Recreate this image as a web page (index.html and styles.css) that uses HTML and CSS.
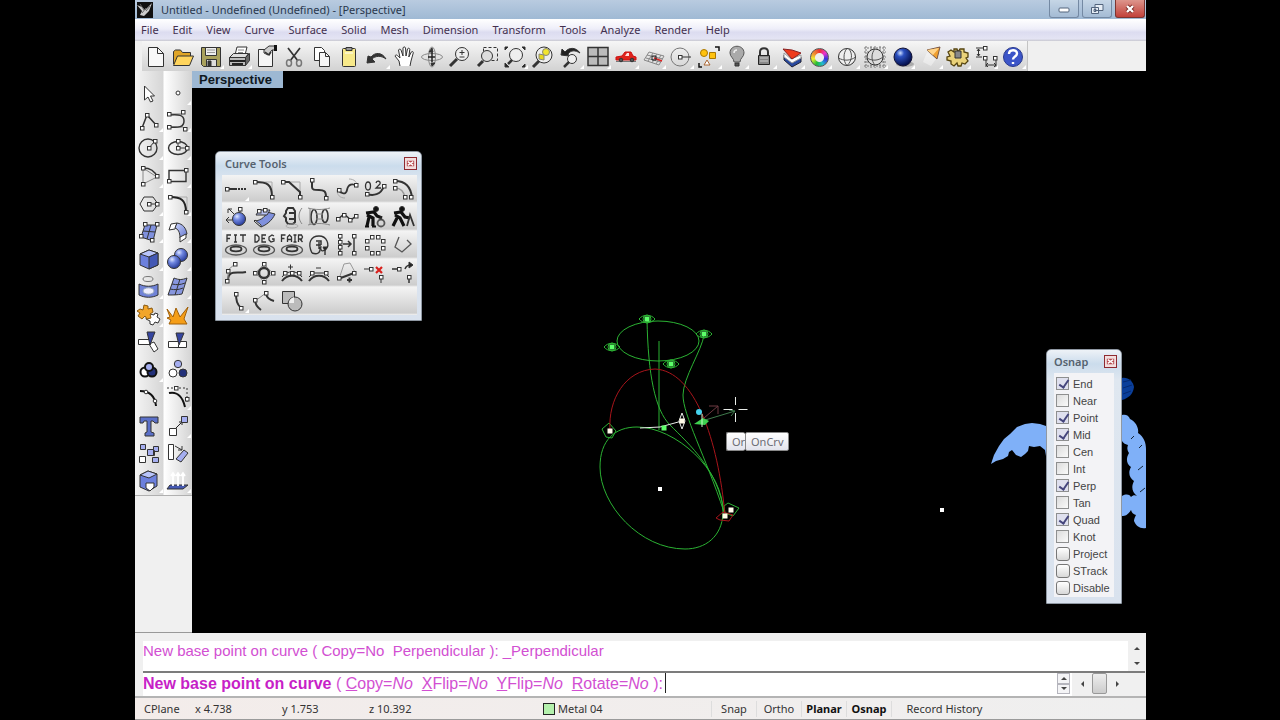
FILE: index.html
```html
<!DOCTYPE html>
<html lang="en">
<head>
  <meta charset="UTF-8">
  <meta name="viewport" content="width=device-width, initial-scale=1.0">
  <title>Untitled - Undefined (Undefined) - [Perspective]</title>
  <link rel="stylesheet" href="styles.css">
</head>
<body>
  <!-- shared icon parts -->
  <svg class="defs" aria-hidden="true">
    <defs>
      <rect id="h" x="-1.5" y="-1.5" width="3.5" height="3.5" fill="#fff" stroke="#333"/>
      <rect id="pt" x="-2.5" y="-2.5" width="5" height="5" stroke="none"/>
      <path id="eye" d="M-8 0c4-5 12-5 16 0-4 5-12 5-16 0zM-4 0a4 4 0 0 1 8 0 4 4 0 0 1-8 0z"/>
      <g id="rings"><ellipse cx="12" cy="17" rx="10.500" ry="5" stroke="#555" stroke-width="1.300"/><ellipse cx="12" cy="16" rx="5.500" ry="2.300" stroke-width="1.800"/></g>
      <radialGradient id="ball" cx="35%" cy="30%" r="70%"><stop offset="0" stop-color="#dde6ff"/><stop offset=".4" stop-color="#6f86e0"/><stop offset="1" stop-color="#2b3f9c"/></radialGradient>
      <radialGradient id="dark" cx="35%" cy="28%" r="70%"><stop offset="0" stop-color="#cfe0ff"/><stop offset=".3" stop-color="#2b50c0"/><stop offset="1" stop-color="#04104e"/></radialGradient>
      <linearGradient id="sheet" x2="1" y2="1"><stop offset="0" stop-color="#c9d3fb"/><stop offset="1" stop-color="#6577cf"/></linearGradient>
    </defs>
  </svg>

  <div class="app">
    <header class="titlebar">
      <svg class="app-icon" viewBox="0 0 16 16"><path d="M0 0h16v16H0z" fill="#111"/><path d="M0 3l5 2 3 3 7-7-3 8-5 5-4-1 2-4z" fill="#ccc"/><path d="M3 2l4 6M9 6l-4 5M9 9l4-5" stroke="#666"/></svg>
      <h1>Untitled - Undefined (Undefined) - [Perspective]</h1>
      <div class="window-btns">
        <button aria-label="Minimize"><svg viewBox="0 0 16 12"><rect x="3" y="5" width="10" height="4" rx="1" fill="#fff" stroke="#53647c"/></svg></button>
        <button aria-label="Restore"><svg viewBox="0 0 16 12"><path d="M6 1.500h8v6H6zM2.500 4.500h7v6h-7z" fill="#e6edf5" stroke="#53647c"/><path d="M5 6.500h2v2H5z" stroke="#53647c" fill="none"/></svg></button>
        <button class="close" aria-label="Close"><svg viewBox="0 0 16 12"><path d="M5 3l6 6M11 3l-6 6" stroke="#7a2a25" stroke-width="4"/><path d="M5 3l6 6M11 3l-6 6" stroke="#fff" stroke-width="2.400"/></svg></button>
      </div>
    </header>

    <nav class="menubar">
      <a href="#">File</a><a href="#">Edit</a><a href="#">View</a><a href="#">Curve</a><a href="#">Surface</a><a href="#">Solid</a><a href="#">Mesh</a><a href="#">Dimension</a><a href="#">Transform</a><a href="#">Tools</a><a href="#">Analyze</a><a href="#">Render</a><a href="#">Help</a>
    </nav>

    <div class="toolbar">
      <div class="tools">
        <button aria-label="New"><svg viewBox="0 0 24 24"><path d="M4.500 2.500h9l6 6v13h-15z" fill="#f8f8f8"/><path d="M13.500 2.500v6h6"/></svg></button>
        <button aria-label="Open"><svg viewBox="0 0 24 24"><path d="M2.500 19V6.500l2-1.500h5l2 2.500h8V11" fill="#e0a526"/><path d="M2.500 20.500L6.500 11h16l-4 9.500z" fill="#ffd45c"/></svg></button>
        <button class="fly" aria-label="Save"><svg viewBox="0 0 24 24"><path d="M2.500 2.500h19v19h-17l-2-2z" fill="#a9a15c"/><path d="M6.500 2.500h11v8h-11z" fill="#eee"/><path d="M8 5h8M8 7.500h8" stroke="#999"/><path d="M7.500 14.500h10v7h-10z" fill="#ddd"/><path d="M9 16h3v5H9z" fill="#333"/></svg></button>
        <button class="fly" aria-label="Print"><svg viewBox="0 0 24 24"><path d="M8 10l2-8h10l-2 8z" fill="#fff"/><path d="M2.500 12.500l4-4h15l-3 4z" fill="#ddd"/><path d="M2.500 12.500h16v8h-16z" fill="#bbb"/><path d="M18.500 12.500l4-4v7l-4 5z" fill="#666"/><path d="M3 16h15M5 19h11" stroke="#222" stroke-width="2"/><path d="M11 5h6M11 7.500h5" stroke="#888"/></svg></button>
        <button aria-label="Document properties"><svg viewBox="0 0 24 24"><path d="M4.500 4.500h14v17h-14z" fill="#f5f5f5"/><path d="M10 5l5-4h7v4h-4l-4 5-4-2z" fill="#ccc"/><path d="M21.500 0v6" stroke="#111" stroke-width="3"/><path d="M11 7l4 3 2-3" stroke-width="1.500"/></svg></button>
        <button aria-label="Cut"><svg viewBox="0 0 24 24"><path d="M6 3l10 13M18 3L8 16" stroke-width="1.700"/><ellipse cx="7" cy="18" rx="2.500" ry="3.200" stroke="#777" stroke-width="1.500"/><ellipse cx="17" cy="18" rx="2.500" ry="3.200" stroke="#777" stroke-width="1.500"/></svg></button>
        <button aria-label="Copy"><svg viewBox="0 0 24 24"><path d="M4.500 2.500h7l3 3v10h-10z" fill="#fff"/><path d="M9.500 7.500h6l4 4v10h-10z" fill="#f5f5f5"/><path d="M15.500 7.500v4h4"/></svg></button>
        <button aria-label="Paste"><svg viewBox="0 0 24 24"><rect x="5.500" y="3.500" width="13" height="18" rx="1" fill="#f7e98a"/><path d="M9 2.500h6v3H9z" fill="#999"/><path d="M8 8h8" stroke="#fff"/></svg></button>
        <button class="fly" aria-label="Undo"><svg viewBox="0 0 24 24"><path d="M7 14c3-3 9-4 14 0-4-7-11-7-15-2l-3-1-1 7 8-1z" fill="#333"/></svg></button>
        <button aria-label="Pan"><svg viewBox="0 0 24 24"><path d="M7 21l-1-5-4-5c1-2 2-1 5 2L5.500 5c1-1.500 2-1 2.500 0l2 6V3c.5-1.500 2-1.500 2.500 0l.5 8 1.500-7c1-1.500 2-1 2.300.5L15.800 12l2.500-5c1-1 2-.5 2 .8L18 16l-1 5" fill="#fff"/></svg></button>
        <button aria-label="Rotate view"><svg viewBox="0 0 24 24"><ellipse cx="12" cy="12" rx="10.500" ry="3.500" stroke="#888"/><ellipse cx="12" cy="12" rx="3.500" ry="10" stroke="#888"/><path d="M12 7v10M8 12h7" stroke="#222" stroke-width="1.500"/><path d="M9 7l3-4 1 4zM11 18l1 3 3-3z" fill="#333"/></svg></button>
        <button aria-label="Zoom dynamic"><svg viewBox="0 0 24 24"><circle cx="14" cy="9" r="6.500" fill="#eee"/><path d="M2 21l7-7" stroke-width="3"/><path d="M14 5v5M11.500 7.500h5M11.500 12h5"/></svg></button>
        <button aria-label="Zoom window"><svg viewBox="0 0 24 24"><path d="M7.500 2.500h14v13h-14z" stroke-dasharray="3 2"/><circle cx="11" cy="11" r="5.500" fill="#ddd"/><path d="M2 21l5-5" stroke-width="3"/></svg></button>
        <button class="fly" aria-label="Zoom extents"><svg viewBox="0 0 24 24"><circle cx="13" cy="10" r="6.500" fill="#eee"/><path d="M5 19l4-4" stroke-width="2.500"/><path d="M2 2h3l-3 3zM22 2h-3l3 3zM2 22v-4l4 4zM22 22h-3l3-3z" fill="#222"/></svg></button>
        <button aria-label="Zoom selected"><svg viewBox="0 0 24 24"><circle cx="13" cy="10" r="8" fill="#eee"/><circle cx="15" cy="7" r="3.500" fill="#f2e52e" stroke="#887"/><path d="M8 9l5 1v5l-5-1z" fill="#e8d820" stroke="#887"/><path d="M2 22l6-6" stroke-width="3"/></svg></button>
        <button class="fly" aria-label="Undo view"><svg viewBox="0 0 24 24"><path d="M6 7c4-5 11-5 15 1-5-3-9-3-12 1l1 2-8-1 1-6z" fill="#222"/><circle cx="13" cy="14" r="4.500" fill="#eee"/><path d="M5 22l5-5" stroke-width="2.500"/></svg></button>
        <button class="fly" aria-label="Four viewports"><svg viewBox="0 0 24 24"><path d="M2 2.500h20v18H2z" fill="#bbb" stroke-width="1.500"/><path d="M12 2.500v18M2 11.500h20" stroke-width="1.500"/></svg></button>
        <button class="fly" aria-label="Right view"><svg viewBox="0 0 24 24"><path d="M2 15v-3l6-1 3-4h6l2 4 3 1v3z" fill="#e0241c" stroke="#c11"/><path d="M11 11l2-3h2v3z" fill="#fdd" stroke="none"/><path d="M2 16.500h20" stroke="#777"/><circle cx="7" cy="15" r="1.800" fill="#555"/><circle cx="18" cy="15" r="1.800" fill="#555"/></svg></button>
        <button class="fly" aria-label="Construction plane"><svg viewBox="0 0 24 24"><path d="M7 7l15 4-5 9-15-5zM5 10l16 4M4 13l15 4M11 8l-5 8M15 9l-5 9M19 10l-5 9" stroke="#888"/><path d="M12 13l8 3" stroke="#d22" stroke-width="1.500"/><path d="M10 11h4v4h-4z" stroke="#222"/></svg></button>
        <button class="fly" aria-label="Object snap"><svg viewBox="0 0 24 24"><circle cx="11" cy="12" r="9" stroke="#777"/><path d="M11 12h11"/><use href="#h" x="11" y="12"/></svg></button>
        <button class="fly" aria-label="Select"><svg viewBox="0 0 24 24"><circle cx="7" cy="8" r="3.500" fill="#ffc20e" stroke="#a70"/><path d="M12.500 7.500h6v6h-6z" fill="#ffc20e" stroke="#a70"/><path d="M10 15l3 5H7z" fill="#fff" stroke="#a63"/><path d="M18 2h4v4M2 18v4h3" stroke="#111" stroke-width="1.500"/></svg></button>
        <button class="fly" aria-label="Hide"><svg viewBox="0 0 24 24"><path d="M9 17c0-4-4-5-4-9 0-9 14-9 14 0 0 4-4 5-4 9z" fill="#aaa" stroke="#555"/><path d="M10 18h4v3h-4z" fill="#555"/><path d="M9 8c0-2 1-3 3-3" stroke="#eee" stroke-width="1.500"/></svg></button>
        <button class="fly" aria-label="Lock"><svg viewBox="0 0 24 24"><path d="M8 11V7c0-5 8-5 8 0v4" stroke-width="2"/><path d="M6.500 10.500h11v9h-11z" fill="#888" stroke="#222"/><path d="M8 13h8M8 16h8" stroke="#ccc"/></svg></button>
        <button class="fly" aria-label="Layers"><svg viewBox="0 0 24 24"><path d="M4 10l7 6 10-4v5l-9 5-8-7z" fill="#27489e" stroke="#223"/><path d="M4 8l7 6 10-4v3l-9 5-8-6z" fill="#fff" stroke="#999"/><path d="M3 4l9 1 9 3-9 6z" fill="#ef3b1c" stroke="#822"/></svg></button>
        <button class="fly" aria-label="Object properties"><span class="wheel"></span></button>
        <button class="fly" aria-label="Shaded viewport"><svg viewBox="0 0 24 24"><circle cx="12" cy="12" r="8.500" fill="#eee"/><path d="M12 3.500c-4 4-4 13 0 17M3.500 13c5 3 12 3 17-1M14 4c4 5 3 12-2 16.500" stroke="#555"/></svg></button>
        <button class="fly" aria-label="Render preview"><svg viewBox="0 0 24 24"><path d="M3 1v22M8 1v22M12 1v22M17 1v22M21 1v22M1 3h22M1 7h22M1 12h22M1 17h22M1 21h22" stroke="#777" stroke-dasharray="2 1"/><circle cx="12" cy="12" r="8" fill="#ddd"/><path d="M12 4c-4 4-4 12 0 16M4 13c5 3 11 3 16-1" stroke="#555"/></svg></button>
        <button class="fly" aria-label="Render"><svg viewBox="0 0 24 24"><ellipse cx="14" cy="19" rx="9" ry="3" fill="#aaa" stroke="none"/><circle cx="12" cy="12" r="9" fill="url(#dark)" stroke="#113"/></svg></button>
        <button class="fly" aria-label="Spotlight"><svg viewBox="0 0 24 24"><path d="M9 7l9 7-5 7-8-4z" fill="#fff" stroke="none" opacity=".4"/><path d="M9 5l13-3-3 12z" fill="#f0a030" stroke="#754"/><path d="M9 5l12-2-6 7z" fill="#ffd48a" stroke="none"/></svg></button>
        <button class="fly" aria-label="Options"><svg viewBox="0 0 24 24"><path d="M8 4h3l1 3 2-3h4v3l4 1v4l-2 1 2 3-3 3-3-1-1 3h-3l-1-3-3 3-3-2v-3l-4-1v-3l3-1-2-4 3-2 3 2z" fill="#ead27a" stroke="#54430f" stroke-width="1.300"/><path d="M9 6h6v7H9z" fill="#888"/></svg></button>
        <button class="fly" aria-label="Dimension"><svg viewBox="0 0 24 24"><path d="M2 3h7M2 12h6M4.500 4v7M3 6l1.500-2L6 6M3 9l1.500 2L6 9M12 15v7M22 15v7M12 20h10M14 18l-2 2 2 2M20 18l2 2-2 2"/><use href="#h" x="11" y="3"/><use href="#h" x="11" y="13"/><use href="#h" x="21" y="13"/></svg></button>
        <button class="fly" aria-label="Help"><svg viewBox="0 0 24 24"><circle cx="12" cy="12" r="9.500" fill="#3c55c8" stroke="#2a3a8c"/><path d="M8 9c0-5 8-5 8-.5 0 3-4 3-4 6M12 17v2" stroke="#fff" stroke-width="2.400"/></svg></button>
      </div>
    </div>

    <main class="workspace">
      <aside class="sidebar">
        <div class="side-tools">
          <button aria-label="Select objects"><svg viewBox="0 0 24 24"><path d="M7.500 5v14l3.500-3 2.500 5 2.500-1-2.500-5h4z" fill="#fff"/></svg></button>
          <button class="fly" aria-label="Point"><svg viewBox="0 0 24 24"><circle cx="12" cy="12" r="2" fill="#fff"/></svg></button>
          <button class="fly" aria-label="Polyline"><svg viewBox="0 0 24 24"><path d="M5 19l5-13 10 11" stroke-width="1.500"/><use href="#h" x="5" y="19"/><use href="#h" x="10" y="6"/><use href="#h" x="19" y="16"/></svg></button>
          <button class="fly" aria-label="Control point curve"><svg viewBox="0 0 24 24"><path d="M3 5h13M3 18h14" stroke="#777"/><path d="M3 6c10-1 15 0 15 6s-5 7-15 6" stroke-width="1.500"/><use href="#h" x="3" y="5"/><use href="#h" x="17" y="3"/><use href="#h" x="3" y="18"/><use href="#h" x="19" y="20"/></svg></button>
          <button class="fly" aria-label="Circle"><svg viewBox="0 0 24 24"><circle cx="11" cy="12" r="9" stroke-width="1.400"/><path d="M12 12l5-6"/><use href="#h" x="12" y="12"/><use href="#h" x="18" y="5"/></svg></button>
          <button class="fly" aria-label="Ellipse"><svg viewBox="0 0 24 24"><ellipse cx="12" cy="12" rx="9.500" ry="6.500" stroke-width="1.400"/><path d="M12 12h9M12 12V6"/><use href="#h" x="12" y="12"/><use href="#h" x="12" y="5"/><use href="#h" x="21" y="12"/></svg></button>
          <button class="fly" aria-label="Arc"><svg viewBox="0 0 24 24"><path d="M6 20l14-7L6 4z" stroke="#888"/><path d="M6 4c7 0 12 3 14 9" stroke-width="1.500"/><use href="#h" x="6" y="4"/><use href="#h" x="6" y="20"/><use href="#h" x="20" y="12"/></svg></button>
          <button class="fly" aria-label="Rectangle"><svg viewBox="0 0 24 24"><path d="M3 6.500h17v11H3z" stroke-width="1.400"/><use href="#h" x="20" y="6"/><use href="#h" x="3" y="17"/></svg></button>
          <button class="fly" aria-label="Polygon"><svg viewBox="0 0 24 24"><path d="M7 5h9l5 7-5 7H7l-4-7z"/><path d="M12 12h8"/><use href="#h" x="12" y="12"/><use href="#h" x="20" y="12"/></svg></button>
          <button class="fly" aria-label="Fillet curves"><svg viewBox="0 0 24 24"><path d="M4 5h17v15" stroke="#aaa"/><path d="M4 5c11 0 16 3 16 15" stroke="#222" stroke-width="2"/><use href="#h" x="4" y="5"/><use href="#h" x="20" y="20"/></svg></button>
          <button class="fly" aria-label="Surface from points"><svg viewBox="0 0 24 24"><path d="M8 5h12l-4 16-12-4z" fill="#7f90dd"/><path d="M14 5l-4 14M6 11l12 1"/><use href="#h" x="8" y="4"/><use href="#h" x="20" y="4"/><use href="#h" x="4" y="16"/><use href="#h" x="15" y="20"/></svg></button>
          <button class="fly" aria-label="Fillet surface"><svg viewBox="0 0 24 24"><path d="M5 4l6-1-2 6-6 1z" fill="#fff"/><path d="M11 3c6 1 9 5 10 11l-7 4C14 12 12 9 9 8z" fill="url(#sheet)"/><path d="M14 17l6-3v4l-6 4z" fill="#fff"/></svg></button>
          <button class="fly" aria-label="Box"><svg viewBox="0 0 24 24"><path d="M3 7l9-4 9 3v12l-9 4-9-4z" fill="#6c80dd"/><path d="M3 7l9 3 9-4-9-3z" fill="#b8c4fa"/><path d="M12 10l9-4v12l-9 4z" fill="#4358b4"/></svg></button>
          <button class="fly" aria-label="Boolean union"><svg viewBox="0 0 24 24"><circle cx="15" cy="8" r="6.500" fill="url(#ball)"/><circle cx="8" cy="15" r="6.500" fill="url(#ball)"/></svg></button>
          <button class="fly" aria-label="Project curves"><svg viewBox="0 0 24 24"><ellipse cx="11" cy="4" rx="5" ry="2.500" stroke="#777"/><path d="M2 9c6 3 13 3 19 0v11c-6 3-13 3-19 0z" fill="#7083d8"/><ellipse cx="11.500" cy="16" rx="5.500" ry="3.200" fill="#eef" stroke="#9ab"/></svg></button>
          <button class="fly" aria-label="Mesh"><svg viewBox="0 0 24 24"><path d="M8 3c5 2 8 2 13 0l-5 16c-5 1-8 1-14 1z" fill="#8796de"/><path d="M14 4L9 20M6 9c5 1 8 1 13-1M4 14c5 1 8 1 13-1"/></svg></button>
          <button class="fly" aria-label="Join"><svg viewBox="0 0 24 24"><path d="M13 11l4 1 1-2 3 1-1 3 3 2-2 4-3-1-2 3-3-1v-3l-4-2 1-3z" fill="#fff"/><path d="M3 6l3 1 1-5 4 1v3l4-1 1 4-3 2 1 4-4 1-2-3-3 3-4-3 2-3-3-2z" fill="#f2a52a" stroke="#8a5a10"/></svg></button>
          <button aria-label="Explode"><svg viewBox="0 0 24 24"><path d="M1 6l6 8 3-9 4 9 8-10-4 12 3 5H3l2-4-4-2 3-1z" fill="#f59e18" stroke="#a0600a"/></svg></button>
          <button aria-label="Trim"><svg viewBox="0 0 24 24"><path d="M1.500 9.500h12v5h-12zM12 14l5-2 4 7-4 3z" fill="#fff"/><path d="M10 2h8l-5 13z" fill="#3545a0"/></svg></button>
          <button aria-label="Split"><svg viewBox="0 0 24 24"><path d="M2.500 11.500h18v6h-18z" fill="#fff"/><path d="M10 3h8l-5 12z" fill="#3545a0"/><path d="M12.500 15v3"/></svg></button>
          <button class="fly" aria-label="Group"><svg viewBox="0 0 24 24"><circle cx="8" cy="14" r="4.500" fill="#fff" stroke="#111" stroke-width="2"/><circle cx="15" cy="14" r="4.500" fill="#223079" stroke="#111" stroke-width="2"/><circle cx="12" cy="9" r="4" fill="#a5aef0" stroke="#111" stroke-width="2"/></svg></button>
          <button aria-label="Ungroup"><svg viewBox="0 0 24 24"><circle cx="12" cy="6" r="3.700" fill="#a5aef0"/><circle cx="7" cy="15" r="4" fill="#fff"/><circle cx="17" cy="15" r="4" fill="#223079"/></svg></button>
          <button aria-label="Edit points"><svg viewBox="0 0 24 24"><path d="M3 5c9 0 15 5 16 15" stroke="#111" stroke-width="2"/><circle cx="9" cy="6" r="1.800" fill="#fff"/><circle cx="18" cy="15" r="1.800" fill="#fff"/></svg></button>
          <button class="fly" aria-label="Control points on"><svg viewBox="0 0 24 24"><path d="M3 7c9-2 14 5 16 14" stroke="#111" stroke-width="2"/><path d="M1 2h20v14" stroke-dasharray="2 2"/><use href="#h" x="10" y="2"/><use href="#h" x="21" y="13"/></svg></button>
          <button aria-label="Text"><svg viewBox="0 0 24 24"><path d="M3 3h18v6h-3l-2-2h-2v11l3 1v3H8v-3l2-1V7H7L6 9H3z" fill="#5b70c8"/></svg></button>
          <button class="fly" aria-label="Move"><svg viewBox="0 0 24 24"><path d="M9 15l7-7M13 8h3v3" stroke="#222"/><path d="M3.500 14.500h7v7h-7z" fill="#fff"/><path d="M15.500 2.500h6v6h-6z" fill="#a5aef0"/></svg></button>
          <button aria-label="Array"><svg viewBox="0 0 24 24"><path d="M3.500 3.500h5v5h-5zM12.500 9.500h5v5h-5zM16.500 5.500h5v5h-5z" fill="#a5aef0"/><path d="M10.500 8.500h6v6h-6zM15.500 16.500h6v5h-6z" fill="#a5aef0"/><path d="M2.500 15.500h6v6h-6z" fill="#fff"/></svg></button>
          <button aria-label="Orient"><svg viewBox="0 0 24 24"><path d="M2.500 3.500h5v15h-5z" fill="#fff"/><path d="M10 18l8-9 4 3-7 9z" fill="#a5aef0"/><path d="M9 5l7 4M16 5v4h-4"/></svg></button>
          <button class="fly" aria-label="Check"><svg viewBox="0 0 24 24"><path d="M3 6l8-4 9 3v12l-8 5-9-4z" fill="#6c80dd"/><path d="M3 6l9 3 8-4-9-3z" fill="#b8c4fa"/><path d="M9 14h8v4l-4 4-4-3z" fill="#fff"/></svg></button>
          <button class="fly" aria-label="Analyze direction"><svg viewBox="0 0 24 24"><path d="M4 16h18l-5 4H1z" fill="#4559b4"/><path d="M7 17V5M12 17V5M17 17V5M5 7l2-3 2 3M10 7l2-3 2 3M15 7l2-3 2 3" stroke="#fff" stroke-width="1.800"/></svg></button>
        </div>
      </aside>

      <section class="viewport">
        <svg class="scene" viewBox="192 71 954 562" preserveAspectRatio="xMinYMin meet">
          <!-- torus chain behind the Osnap panel -->
          <g fill="#7fb0f8">
            <path d="M991 464l3-9 5-9 5-7 6-5 7-7 8-3 7-1 8 1 6 2 4-1v33l-4-2-1-6-5-4-6 1-5-1-1 5-3 3-4 3-5-2-4-5-3 2-1 4-5 3-7 2z"/>
            <path d="M1122 415c3-1 7 0 8 4 6 3 9 9 8 14 6 4 8 10 8 16v79c-6 1-10-2-12-7 0-2 1-4 2-6-3-1-4-2-5-5-3 5-6 6-9 6v-20c4-2 7-2 9 1 2-2 4-2 6-1-5-4-6-9-3-15-5-3-6-9-3-14-5-3-5-9-2-14-2-3-2-5-1-8-3-1-5-2-6-4z"/>
          </g>
          <path d="M1122 378c6-1 11 3 12 9-1 7-5 11-12 13z" fill="#0b3f9a"/>
          <path d="M1123 382l8-2M1123 388l9-3M1123 394l8-3" stroke="#062a70" fill="none"/>
          <path d="M1131 439l3-3M1139 448l3-3M1138 470l5-4M1140 492l5-4" stroke="#123" fill="none"/>

          <g class="green">
            <ellipse cx="658" cy="341" rx="41" ry="20"/>
            <path d="M659 341v89"/>
            <path d="M647 319c1 56 8 91 23 106 20 20 48 45 54 87"/>
            <path d="M704 335c-2 15-21 43-21 60 0 20 22 60 41 117"/>
            <path d="M637 427c38 0 87 43 86 86-1 24-18 36-38 36-45 0-85-44-85-82 0-27 15-40 37-40z"/>
            <use href="#eye" x="647" y="319"/><use href="#eye" x="704" y="334"/><use href="#eye" x="612" y="347"/><use href="#eye" x="671" y="364"/>
            <path d="M602 429l7-6 7 8-4 7-6-1zM724 506l4-3 11 5-6 8-8-3z"/>
          </g>
          <path class="red" d="M610 430c-2-30 15-60 45-61 40 2 63 71 70 146"/>
          <path class="red" d="M716 518l7-6 10 3-4 6-9-1z"/>
          <path class="white" d="M640 428l20-1 22-6M682 413l3 8-3 8-3-8z"/>
          <path d="M702 421l33-10M729 410l6 1-4 5" stroke="#3f7a4c" fill="none"/>
          <path d="M704 418l14-12M709 406l9 0 0 8" stroke="#6e3a42" fill="none"/>
          <path d="M694 424l9-6 6 3-4 4z" fill="#3fd04f"/>
          <path d="M702 414v13" stroke="#cfc"/>
          <circle cx="699" cy="412" r="3" fill="#45d2ee"/>
          <path class="white" d="M723.500 409.500h9M738.500 409.500h9M735.500 397v8M735.500 413v9"/>
          <g fill="#5dff6a">
            <use href="#pt" x="647" y="319"/><use href="#pt" x="704" y="334"/><use href="#pt" x="612" y="347"/><use href="#pt" x="671" y="364"/><use href="#pt" x="664" y="428"/>
          </g>
          <g fill="#fffbe8">
            <use href="#pt" x="610" y="431"/><use href="#pt" x="682" y="421"/><use href="#pt" x="731" y="510"/><use href="#pt" x="725" y="516"/>
          </g>
          <path d="M658 487h4v4h-4zM940 508h4v4h-4z" fill="#fff"/>
        </svg>
        <span class="view-label">Perspective</span>

        <div class="snap-tips"><span class="tip">Or</span><span class="tip">OnCrv</span></div>

        <section class="panel curve-tools">
          <header><h2>Curve Tools</h2><button class="panel-close" aria-label="Close Curve Tools"><svg viewBox="0 0 12 12"><path d="M2 3h8v6H2z" fill="#b5484c"/><path d="M3 4l6 4M9 4L3 8" stroke="#fff" stroke-width="1.500"/></svg></button></header>
          <div class="panel-tools">
            <button class="fly" aria-label="Extend"><svg viewBox="0 0 24 24"><path d="M4 12h7" stroke-width="2"/><path d="M11 12h11" stroke-width="2" stroke-dasharray="2 1"/><use href="#h" x="3" y="12"/></svg></button>
            <button aria-label="Fillet"><svg viewBox="0 0 24 24"><path d="M3 5h17v16" stroke="#aaa"/><path d="M3 5c12 0 17 2 17 15" stroke-width="2"/><use href="#h" x="3" y="5"/><use href="#h" x="20" y="20"/></svg></button>
            <button aria-label="Chamfer"><svg viewBox="0 0 24 24"><path d="M3 5h17v16" stroke="#aaa"/><path d="M3 5h6l11 10v5" stroke-width="2"/><use href="#h" x="3" y="5"/><use href="#h" x="20" y="20"/></svg></button>
            <button aria-label="Connect"><svg viewBox="0 0 24 24"><path d="M5 4v6c0 3 2 3 7 3s7 1 7 7" stroke-width="2"/><use href="#h" x="5" y="3"/><use href="#h" x="19" y="21"/></svg></button>
            <button aria-label="Blend"><svg viewBox="0 0 24 24"><path d="M14 2c5 0 9 3 8 9M2 13c0 5 3 8 8 8" stroke="#aaa"/><path d="M3 12c2 4 8 7 9 1s6-7 9-4" stroke-width="1.800"/><use href="#h" x="4" y="13"/><use href="#h" x="21" y="8"/></svg></button>
            <button aria-label="Adjustable blend"><svg viewBox="0 0 24 24"><ellipse cx="5" cy="9" rx="2.500" ry="4" stroke-width="1.300"/><path d="M13 6c1-3 5-2 4 1l-4 4h5" stroke-width="1.300"/><path d="M4 17c6 2 14 1 17-8" stroke-width="2"/><use href="#h" x="4" y="17"/><use href="#h" x="21" y="9"/></svg></button>
            <button aria-label="Offset"><svg viewBox="0 0 24 24"><path d="M4 4c10 0 16 6 17 17" stroke-width="2"/><path d="M4 11c6 0 9 3 10 10" stroke="#999" stroke-width="1.500"/><use href="#h" x="4" y="4"/><use href="#h" x="4" y="11"/><use href="#h" x="14" y="20"/><use href="#h" x="20" y="20"/></svg></button>

            <button aria-label="Tween"><svg viewBox="0 0 24 24"><circle cx="15" cy="14" r="6.500" fill="url(#ball)"/><path d="M10 9L5 4M4 8V4h4M8 15H2M5 12l-3 3 3 3M16 7V3"/><use href="#h" x="16" y="4"/></svg></button>
            <button aria-label="Curve from two views"><svg viewBox="0 0 24 24"><path d="M2 16c5 0 11-3 13-9l8 2c-3 7-9 11-14 13z" fill="#7f90dd"/><path d="M2 16l7 6v-2l-6-5z" fill="#fff"/><path d="M4 10l3-5h11l-3 5z" fill="#b9c3f4"/><use href="#h" x="7" y="6"/><use href="#h" x="13" y="5"/></svg></button>
            <button aria-label="Cross-section profiles"><svg viewBox="0 0 24 24"><path d="M8 3h5l2 3v11l-2 2H8l-2-3v-3l-2-2 2-3V6z" stroke-width="2"/><path d="M9 8h5M9 14h5" stroke-width="2"/><ellipse cx="12" cy="21" rx="6" ry="2" stroke="#aaa"/><path d="M22 3c-4 5-4 11 0 16" stroke="#888"/></svg></button>
            <button aria-label="Curve through profiles"><svg viewBox="0 0 24 24"><ellipse cx="7" cy="12" rx="3" ry="7.500" stroke-width="1.600"/><ellipse cx="18" cy="11" rx="3" ry="6.500" stroke-width="1.600"/><path d="M1 3c7 2 15 2 22 0M1 20c7-2 15-2 22 0M9 9h7M9 14h7M3 3v17" stroke="#888"/></svg></button>
            <button aria-label="Rebuild"><svg viewBox="0 0 24 24"><path d="M2 15l7-6 7 6 6-5" stroke-width="1.600"/><use href="#h" x="3" y="14"/><use href="#h" x="9" y="10"/><use href="#h" x="15" y="15"/><use href="#h" x="21" y="11"/></svg></button>
            <button aria-label="Rebuild with worker"><svg viewBox="0 0 24 24"><circle cx="13" cy="4" r="2.500" fill="#111"/><path d="M3 8l8-1 3 4 5 2M4 10l6 3v8M6 12l-2 9" stroke="#111" stroke-width="3.200"/><path d="M2 21.500h4M9 21.500h4" stroke="#111" stroke-width="2"/><circle cx="18" cy="18" r="3.500" stroke="#555" stroke-width="1.800"/><path d="M18 11v4"/></svg></button>
            <button aria-label="Rebuild non-uniform"><svg viewBox="0 0 24 24"><circle cx="11" cy="4" r="2.500" fill="#111"/><path d="M3 8l7-1 4 5 5 1M4 10l5 3 4 8M6 13l-4 8" stroke="#111" stroke-width="3.200"/><path d="M16 21l3-11 4 11" stroke-width="1.800"/></svg></button>

            <button aria-label="Fit"><svg viewBox="0 0 24 24"><path d="M3 9V2h4M3 5.500h3M10 2h3M11.500 2v7M10 9h3M16 2h6M19 2v7" stroke-width="1.300"/><use href="#rings"/></svg></button>
            <button aria-label="Degree"><svg viewBox="0 0 24 24"><path d="M3 2v7h2l2-2V4L5 2zM14 2h-4v7h4M10 5.500h3M22 3l-2-1-3 2v3l2 2 3-1V6h-2" stroke-width="1.300"/><use href="#rings"/></svg></button>
            <button aria-label="Fair"><svg viewBox="0 0 24 24"><path d="M1.500 9V2h4M1.500 5.500h3M7.500 9V4l2-2 2 2v5M7.500 6.500h4M13.500 2h3M15 2v7M13.500 9h3M18.500 9V2h3l1 2-1 2h-3M20 6l2.500 3" stroke-width="1.300"/><use href="#rings"/></svg></button>
            <button aria-label="Reseam"><svg viewBox="0 0 24 24"><path d="M5 20C0 10 4 3 12 3s11 9 7 13-6 1-5-3" stroke-width="1.300"/><path d="M5 20c5 2 9 0 8-6M12 9v7M9 12h5M18 18v4" stroke-width="1.400"/><path d="M16 14l2 4 2-4z" fill="#222"/><path d="M9 8h5v4" stroke-width="1.500"/></svg></button>
            <button aria-label="Match"><svg viewBox="0 0 24 24"><path d="M5 3v18M19 3v18" stroke-width="1.400"/><path d="M8 11h8M13 8l3 3-3 3" stroke-width="1.500"/><use href="#h" x="5" y="3"/><use href="#h" x="5" y="9"/><use href="#h" x="5" y="14"/><use href="#h" x="5" y="20"/><use href="#h" x="19" y="3"/><use href="#h" x="19" y="20"/></svg></button>
            <button aria-label="Make periodic"><svg viewBox="0 0 24 24"><use href="#h" x="9" y="4"/><use href="#h" x="15" y="4"/><use href="#h" x="4" y="8"/><use href="#h" x="20" y="8"/><use href="#h" x="4" y="15"/><use href="#h" x="20" y="15"/><use href="#h" x="9" y="20"/><use href="#h" x="15" y="20"/></svg></button>
            <button aria-label="Close curve"><svg viewBox="0 0 24 24"><path d="M8 4l-4 10 7 5 9-8-4-4" stroke="#555" stroke-width="1.300"/></svg></button>

            <button aria-label="Continue curve"><svg viewBox="0 0 24 24"><path d="M4 20c0-12 8-7 18-9" stroke-width="2"/><path d="M4 19V9l7-6" stroke="#888"/><use href="#h" x="3" y="20"/><use href="#h" x="4" y="10"/><use href="#h" x="11" y="3"/></svg></button>
            <button aria-label="Control points"><svg viewBox="0 0 24 24"><circle cx="12" cy="12" r="5" stroke-width="2.500"/><path d="M12 3l9 9-9 9-9-9z" stroke="#aaa"/><use href="#h" x="12" y="3"/><use href="#h" x="21" y="12"/><use href="#h" x="12" y="21"/><use href="#h" x="3" y="12"/></svg></button>
            <button aria-label="Insert point"><svg viewBox="0 0 24 24"><path d="M2 20c5-7 15-7 20 0" stroke-width="2"/><path d="M2 16c5-7 15-7 20 0M8 6h5M10.500 3.500v5"/><use href="#h" x="5" y="12"/><use href="#h" x="12" y="12"/><use href="#h" x="19" y="12"/></svg></button>
            <button aria-label="Remove point"><svg viewBox="0 0 24 24"><path d="M2 20c5-7 15-7 20 0" stroke-width="2"/><path d="M2 16l4-4h12l4 4M9 7h5"/><use href="#h" x="5" y="12"/><use href="#h" x="19" y="12"/></svg></button>
            <button aria-label="Edit points on"><svg viewBox="0 0 24 24"><path d="M4 18l5-15 6-1 6 11" stroke="#999"/><path d="M3 18l16-6M12 19h5M14.500 16.500v5" stroke-width="2"/><use href="#h" x="4" y="17"/><use href="#h" x="19" y="12"/></svg></button>
            <button aria-label="Delete subcurve"><svg viewBox="0 0 24 24"><path d="M1 8h6M18 16v6"/><use href="#h" x="8" y="8"/><use href="#h" x="18" y="16"/><path d="M13 6l6 6M19 6l-6 6" stroke="#d8201c" stroke-width="2.200"/></svg></button>
            <button aria-label="Move subcurve"><svg viewBox="0 0 24 24"><path d="M1 8h6M18 16v6M14 8c1-3 3-4 6-4" stroke-width="1.500"/><path d="M18 1l4 3-4 3z" fill="#222"/><use href="#h" x="8" y="8"/><use href="#h" x="18" y="16"/></svg></button>

            <button class="fly" aria-label="Simplify"><svg viewBox="0 0 24 24"><path d="M12 4c0 8 1 11 5 15" stroke-width="2"/><use href="#h" x="12" y="5"/><use href="#h" x="17" y="19"/></svg></button>
            <button aria-label="Convert to arcs"><svg viewBox="0 0 24 24"><path d="M3 12l11-8" stroke="#888"/><path d="M14 5c1 4 4 6 8 7M3 11c0 4 2 7 6 10" stroke-width="2"/><use href="#h" x="3" y="11"/><use href="#h" x="14" y="4"/></svg></button>
            <button aria-label="Curve boolean"><svg viewBox="0 0 24 24"><path d="M2.500 2.500h12v12h-12z" fill="#bbb"/><circle cx="15" cy="15" r="7" fill="#bbb"/><path d="M9 14c0-3 2-5 5-6v6z" fill="#eee" stroke="none"/></svg></button>
          </div>
        </section>

        <section class="panel osnap">
          <header><h2>Osnap</h2><button class="panel-close" aria-label="Close Osnap"><svg viewBox="0 0 12 12"><path d="M2 3h8v6H2z" fill="#b5484c"/><path d="M3 4l6 4M9 4L3 8" stroke="#fff" stroke-width="1.500"/></svg></button></header>
          <div class="snaps">
            <label><input type="checkbox" checked>End</label>
            <label><input type="checkbox">Near</label>
            <label><input type="checkbox" checked>Point</label>
            <label><input type="checkbox" checked>Mid</label>
            <label><input type="checkbox">Cen</label>
            <label><input type="checkbox">Int</label>
            <label><input type="checkbox" checked>Perp</label>
            <label><input type="checkbox">Tan</label>
            <label><input type="checkbox" checked>Quad</label>
            <label><input type="checkbox">Knot</label>
            <label><input class="mode" type="checkbox">Project</label>
            <label><input class="mode" type="checkbox">STrack</label>
            <label><input class="mode" type="checkbox">Disable</label>
          </div>
        </section>
      </section>
    </main>

    <section class="command">
      <div class="history">
        <p>New base point on curve ( Copy=No&nbsp; Perpendicular ): _Perpendicular</p>
        <div class="v-scroll"><button aria-label="Scroll up"><span class="arrow up"></span></button><button aria-label="Scroll down"><span class="arrow down"></span></button></div>
      </div>
      <div class="prompt">
        <label for="cmd"><b>New base point on curve</b> ( <u>C</u>opy=<i>No</i>&nbsp; <u>X</u>Flip=<i>No</i>&nbsp; <u>Y</u>Flip=<i>No</i>&nbsp; <u>R</u>otate=<i>No</i> ):</label>
        <input id="cmd" type="text">
        <div class="spin"><button aria-label="Previous"><span class="arrow up"></span></button><button aria-label="Next"><span class="arrow down"></span></button></div>
        <div class="h-scroll"><button aria-label="Scroll left"><span class="arrow left"></span></button><span class="thumb"></span><button aria-label="Scroll right"><span class="arrow right"></span></button></div>
      </div>
    </section>

    <footer class="statusbar">
      <button class="cplane">CPlane</button>
      <span class="coord">x 4.738</span>
      <span class="coord">y 1.753</span>
      <span class="coord z">z 10.392</span>
      <button class="layer"><span class="swatch"></span>Metal 04</button>
      <button class="toggle">Snap</button>
      <button class="toggle">Ortho</button>
      <button class="toggle on">Planar</button>
      <button class="toggle on">Osnap</button>
      <button class="toggle record">Record History</button>
    </footer>
  </div>
</body>
</html>
```
FILE: styles.css
```css
:root {
  --ui: "Noto Sans", "Open Sans", sans-serif;
  --sans: "Liberation Sans", Arial, sans-serif;
  --face: #f0f0f0;
  --ink: #333333;
  --magenta: #d24fd2;
}

* {
  box-sizing: border-box;
}

body {
  margin: 0;
  background: #000;
  font-family: var(--ui);
  font-size: 12px;
  color: var(--ink);
}

button {
  padding: 0;
  border: 0;
  background: none;
  font: inherit;
  color: inherit;
}

.defs {
  position: absolute;
  width: 0;
  height: 0;
}

.app {
  display: flex;
  flex-direction: column;
  min-height: 100vh;
  margin: 0 134px 0 135px;
  background: var(--face);
}

/* title bar */
.titlebar {
  display: flex;
  align-items: center;
  height: 19px;
  padding-left: 2px;
  background: linear-gradient(#b9cbe0, #9fb9d4);
}

.app-icon {
  width: 16px;
  height: 16px;
}

.titlebar h1 {
  flex: 1;
  margin: 0 0 0 8px;
  font-size: 11px;
  font-weight: 400;
  line-height: 18px;
  color: #29374c;
}

.window-btns {
  display: flex;
  align-self: flex-start;
  gap: 3px;
  padding-right: 1px;
}

.window-btns button {
  display: flex;
  align-items: center;
  justify-content: center;
  width: 30px;
  height: 18px;
  border: 1px solid #7489a3;
  border-top: 0;
  border-radius: 0 0 3px 3px;
  background: linear-gradient(#c6d6e6, #a4bbd4);
}

.window-btns .close {
  border-color: #7c3530;
  background: linear-gradient(#dd958c, #c2413a);
}

.window-btns svg {
  width: 16px;
  height: 12px;
}

/* menu */
.menubar {
  display: flex;
  gap: 14px;
  height: 22px;
  padding-left: 6px;
  background: linear-gradient(#ffffff 0%, #eeeef9 45%, #dcdcf0 60%, #e4e4f4 90%, #c8c8d0 100%);
}

.menubar a {
  font-size: 11px;
  line-height: 22px;
  color: #43304f;
  text-decoration: none;
}

/* tool buttons */
.toolbar {
  height: 30px;
  padding-left: 7px;
  background: var(--face);
}

.tools {
  display: flex;
  width: 886px;
  height: 30px;
  padding-top: 2px;
  border-right: 1px solid #c4c4c4;
  background: linear-gradient(#f6f6f6, #d2d2d2);
}

.tools button {
  flex: 1;
}

.tools button,
.side-tools button,
.panel-tools button {
  position: relative;
  display: flex;
  align-items: center;
  justify-content: center;
  min-width: 0;
}

.tools svg,
.side-tools svg,
.panel-tools svg {
  width: 24px;
  height: 24px;
  fill: none;
  stroke: var(--ink);
}

.fly::after {
  content: '';
  position: absolute;
  right: 1px;
  bottom: 2px;
  border: 2px solid #fff;
  border-top-color: transparent;
  border-left-color: transparent;
}

.wheel {
  width: 19px;
  height: 19px;
  border: 1px solid #555;
  border-radius: 50%;
  background: radial-gradient(circle, #eee 0 4px, transparent 5px), conic-gradient(#e33, #e3c, #33d, #2bc, #2b3, #ee3, #e83, #e33);
}

.workspace {
  display: flex;
  flex: 1;
  min-height: 562px;
}

.sidebar {
  width: 57px;
  border-bottom: 1px solid #999;
}

.side-tools {
  display: grid;
  grid-template-columns: 1fr 1fr;
  grid-auto-rows: 1fr;
  height: 425px;
  padding-top: 8px;
  border-bottom: 1px solid #b0b0b0;
  background: linear-gradient(90deg, #f4f4f4, #d6d6d6 28px, #fff 29px, #f4f4f4 36px, #d3d3d3);
}

.viewport {
  position: relative;
  flex: 1;
  overflow: hidden;
  background: #000;
}

.scene {
  position: absolute;
  top: 0;
  left: 0;
  width: 100%;
  height: 100%;
}

.scene .green {
  fill: none;
  stroke: #2bb233;
}

.scene .red {
  fill: none;
  stroke: #a8151b;
}

.scene .white {
  fill: none;
  stroke: #e8ece8;
}

.view-label {
  position: absolute;
  top: 0;
  left: 0;
  width: 91px;
  padding-left: 7px;
  background: #9db8d3;
  font: bold 13px/17px var(--sans);
  color: #101820;
}

.snap-tips {
  position: absolute;
  top: 361px;
  left: 534px;
  display: flex;
}

.tip {
  height: 19px;
  padding: 0 5px;
  border: 1px solid #888;
  border-radius: 2px;
  background: linear-gradient(#fff, #e2e3ec);
  font-size: 11px;
  line-height: 17px;
  color: #6c6c74;
}

.tip:first-child {
  width: 19px;
  border-right: 0;
}

/* floating panels */
.panel {
  position: absolute;
  border: 1px solid #8f98a3;
  border-radius: 5px 5px 0 0;
  background: linear-gradient(#eef2f7, #cbdcec 14px, #dfe7f0 30px, #d9e2ee);
}

.panel header {
  display: flex;
  align-items: center;
  justify-content: space-between;
  height: 23px;
}

.panel h2 {
  margin: 0;
  font-size: 11px;
  font-weight: 600;
  color: #56626f;
}

.panel-close {
  width: 13px;
  height: 13px;
  border: 1px solid #8f2a30;
  background: #f2dede;
}

.panel-close svg {
  display: block;
  width: 11px;
  height: 11px;
}

.curve-tools {
  top: 80px;
  left: 23px;
  width: 207px;
  padding: 0 4px 5px 6px;
}

.curve-tools header {
  padding: 0 0 0 3px;
}

.panel-tools {
  display: grid;
  grid-template-columns: repeat(7, 1fr);
  grid-auto-rows: 28px;
  background: repeating-linear-gradient(#f4f4f4 0, #cdcdcd 26px, #f4f4f4 28px);
}

.osnap {
  top: 278px;
  right: 24px;
  width: 76px;
  padding: 0 7px 6px;
}

.osnap .panel-close {
  margin-right: -3px;
}

.snaps {
  padding: 2px 0 1px 2px;
  background: #f3f3f6;
}

.snaps label {
  display: flex;
  align-items: center;
  gap: 4px;
  height: 17px;
  font: 11px var(--sans);
  color: #444;
}

.snaps input {
  appearance: none;
  width: 13px;
  height: 13px;
  margin: 0;
  border: 1px solid #8e8f8f;
  background: linear-gradient(135deg, #dcdcdc, #fafafa);
}

.snaps input:checked {
  background: #dfe0ee;
}

.snaps input:checked::before {
  content: '';
  display: block;
  width: 4px;
  height: 8px;
  margin: 0 0 0 4px;
  border: solid #45457c;
  border-width: 0 2px 2px 0;
  transform: rotate(35deg);
}

.snaps .mode {
  width: 14px;
  height: 14px;
  margin-right: -1px;
  border-color: #777;
  border-radius: 3px;
  background: linear-gradient(#fff, #d8d8d8);
}

/* command line */
.command {
  padding: 8px 1px 0 8px;
  border-bottom: 2px solid #b4b4b4;
  font: 16px/20px var(--sans);
  color: var(--magenta);
}

.history,
.prompt {
  display: flex;
}

.history {
  height: 32px;
  border-bottom: 2px solid #7c7c7c;
  font-size: 15px;
}

.history p {
  flex: 1;
  margin: 0;
  background: #fff;
  white-space: nowrap;
}

.v-scroll {
  display: flex;
  flex-direction: column;
  width: 17px;
}

.v-scroll button,
.spin button,
.h-scroll button {
  display: flex;
  flex: 1;
  align-items: center;
  justify-content: center;
}

.prompt {
  height: 23px;
  background: #fff;
}

.prompt label {
  line-height: 22px;
  white-space: nowrap;
}

.prompt b {
  color: #c71fc7;
}

.prompt input {
  flex: 1;
  min-width: 0;
  height: 20px;
  margin-left: 2px;
  padding: 0;
  border: 0;
  border-left: 1px solid #222;
  outline: 0;
  font: inherit;
}

.spin {
  display: flex;
  flex-direction: column;
  width: 15px;
  padding-bottom: 2px;
}

.spin button {
  width: 13px;
  border: 1px solid #b5b5bd;
  background: #f4f4f6;
}

.h-scroll {
  display: flex;
  width: 73px;
  padding: 0 18px 2px 0;
  background: var(--face);
}

.thumb {
  width: 15px;
  border: 1px solid #999;
  border-radius: 2px;
  background: linear-gradient(#eee, #ccc);
}

.arrow {
  border: 3px solid transparent;
}

.arrow.up {
  border-top: 0;
  border-bottom-color: #444;
}

.arrow.down {
  border-bottom: 0;
  border-top-color: #444;
}

.arrow.left {
  border-left: 0;
  border-right-color: #444;
}

.arrow.right {
  border-right: 0;
  border-left-color: #444;
}

/* status bar */
.statusbar {
  display: flex;
  align-items: center;
  height: 22px;
  padding-left: 9px;
  border-bottom: 1px solid #9a9a9a;
  background: linear-gradient(90deg, #f3ecea, #efefef);
  font-size: 11px;
}

.cplane {
  width: 51px;
  text-align: left;
}

.coord {
  width: 87px;
}

.coord.z {
  width: 174px;
}

.layer {
  display: flex;
  flex: 1;
  align-items: center;
  gap: 3px;
}

.swatch {
  width: 12px;
  height: 12px;
  border: 1px solid #222;
  background: #b4f0ac;
}

.toggle {
  width: 45px;
  height: 16px;
  border-left: 1px solid #ddd;
}

.toggle.on {
  font-weight: 700;
  color: #111;
}

.toggle.record {
  width: 106px;
  margin-right: 149px;
}
```
